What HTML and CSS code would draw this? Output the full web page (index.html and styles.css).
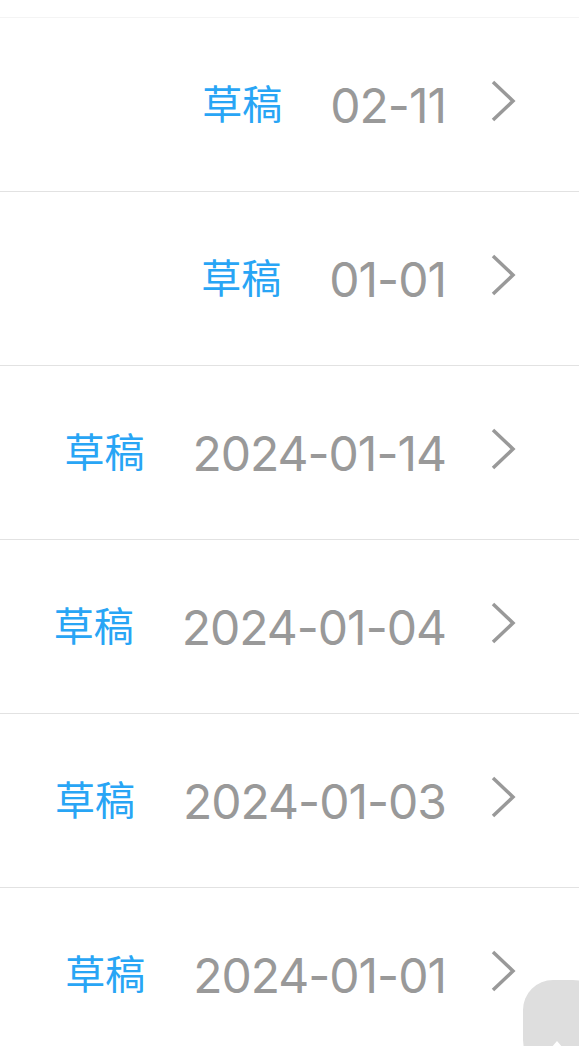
FILE: index.html
```html
<!DOCTYPE html>
<html lang="zh-CN">
<head>
  <meta charset="UTF-8" />
  <title>草稿箱</title>
  <link rel="stylesheet" href="styles.css">
</head>
<body>

  <div class="top-bar"></div>

  <div class="draft-list">
    <div class="draft-row">
      <span class="draft-tag">草稿</span>
      <span class="draft-date">02-11</span>
      <svg class="arrow" viewBox="0 0 26 42"><path d="M3 2 L23 21 L3 40" /></svg>
    </div>
    <div class="draft-row">
      <span class="draft-tag">草稿</span>
      <span class="draft-date">01-01</span>
      <svg class="arrow" viewBox="0 0 26 42"><path d="M3 2 L23 21 L3 40" /></svg>
    </div>
    <div class="draft-row">
      <span class="draft-tag">草稿</span>
      <span class="draft-date">2024-01-14</span>
      <svg class="arrow" viewBox="0 0 26 42"><path d="M3 2 L23 21 L3 40" /></svg>
    </div>
    <div class="draft-row">
      <span class="draft-tag">草稿</span>
      <span class="draft-date">2024-01-04</span>
      <svg class="arrow" viewBox="0 0 26 42"><path d="M3 2 L23 21 L3 40" /></svg>
    </div>
    <div class="draft-row">
      <span class="draft-tag">草稿</span>
      <span class="draft-date">2024-01-03</span>
      <svg class="arrow" viewBox="0 0 26 42"><path d="M3 2 L23 21 L3 40" /></svg>
    </div>
    <div class="draft-row">
      <span class="draft-tag">草稿</span>
      <span class="draft-date">2024-01-01</span>
      <svg class="arrow" viewBox="0 0 26 42"><path d="M3 2 L23 21 L3 40" /></svg>
    </div>
  </div>

  <div class="to-top">
    <svg class="to-top-icon" viewBox="0 0 16 10"><path d="M2 10 L8 3 L14 10 Z" /></svg>
  </div>

</body>
</html>
```

FILE: styles.css
```css
body {
  margin: 0;
  padding: 0;
  background: #ffffff;
  font-family: Inter, "Noto Sans CJK SC", sans-serif;
  overflow: hidden;
}

.top-bar {
  height: 17px;
  border-bottom: 1px solid #f4f4f4;
}

.draft-row {
  display: flex;
  align-items: center;
  justify-content: flex-end;
  height: 173px;
  padding-right: 63px;
  border-bottom: 1px solid #e2e2e2;
}

.draft-tag {
  font-family: "Noto Sans CJK SC", sans-serif;
  font-size: 40px;
  color: #28a5f5;
  margin-right: 48px;
  margin-bottom: 6px;
}

.draft-date {
  font-family: Inter, "Liberation Sans", sans-serif;
  font-size: 48px;
  letter-spacing: -1px;
  color: #999999;
  margin-right: 44px;
  margin-top: 2px;
}

.arrow {
  width: 26px;
  height: 42px;
  margin-bottom: 8px;
}

.arrow path {
  fill: none;
  stroke: #999999;
  stroke-width: 3.5;
}

.to-top {
  position: fixed;
  left: 523px;
  top: 980px;
  width: 80px;
  height: 90px;
  border-radius: 30px;
  background: #dedede;
}

.to-top-icon {
  position: absolute;
  left: 26px;
  top: 58px;
  width: 16px;
  height: 10px;
}

.to-top-icon path {
  fill: #ffffff;
}
```
